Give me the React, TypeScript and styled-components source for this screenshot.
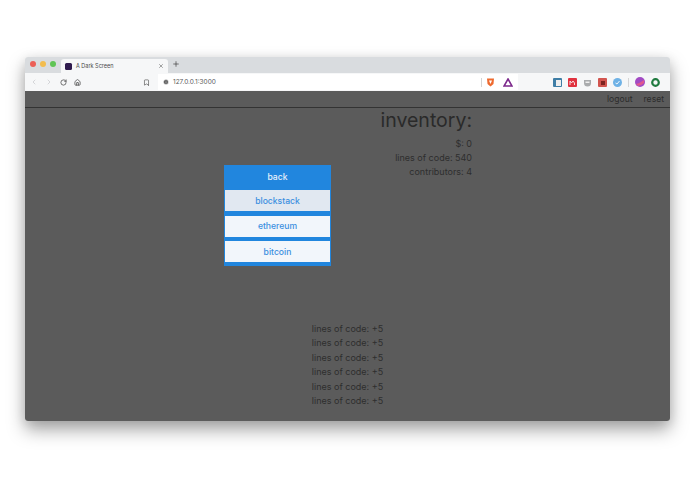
import React from 'react'
import styled, { createGlobalStyle } from 'styled-components'
import { ChevronLeft, ChevronRight, RotateCw, Home, Bookmark, Info, X, Plus } from 'lucide-react'

const GlobalStyle = createGlobalStyle`
  html, body { margin: 0; padding: 0; background: #fff; }
  body { font-family: Inter, "Liberation Sans", sans-serif; }
`

const Page = styled.div`
  width: 695px;
  height: 494px;
  padding: 57px 25px 0;
  box-sizing: border-box;
  overflow: hidden;
`

const Window = styled.div`
  width: 645px;
  height: 364px;
  border-radius: 3px;
  overflow: hidden;
  display: flex;
  flex-direction: column;
  box-shadow: 0 9px 18px rgba(0, 0, 0, 0.34), 0 2px 12px rgba(0, 0, 0, 0.1);
`

const TabStrip = styled.div`
  height: 16px;
  background: #d9dcdf;
  display: flex;
  align-items: flex-end;
  padding-left: 5px;
`

const Lights = styled.div`
  display: flex;
  gap: 4px;
  align-self: center;
  margin-right: 5px;
  margin-bottom: 2px;
`

const Light = styled.span<{ $color: string }>`
  width: 6px;
  height: 6px;
  border-radius: 50%;
  background: ${(p) => p.$color};
`

const Tab = styled.div`
  width: 107px;
  height: 14px;
  background: #f6f7f8;
  border-radius: 3px 3px 0 0;
  display: flex;
  align-items: center;
  padding: 0 4px;
  box-sizing: border-box;
  font-size: 5.5px;
  color: #4a4a4a;
`

const Favicon = styled.span`
  width: 7px;
  height: 7px;
  border-radius: 1.5px;
  background: #2f1b4e;
  margin-right: 4px;
  flex-shrink: 0;
`

const TabTitle = styled.span`
  flex: 1;
`

const NewTab = styled.div`
  margin: 0 0 2px 4px;
  align-self: center;
  display: flex;
  color: #3a3a3a;
`

const Toolbar = styled.div`
  height: 18px;
  background: #f6f7f8;
  display: flex;
  align-items: center;
  padding-left: 5px;
`

const NavIcons = styled.div`
  display: flex;
  align-items: center;
  gap: 7px;
  width: 113px;
  flex-shrink: 0;
`

const NavIcon = styled.span<{ $faded?: boolean }>`
  display: flex;
  color: ${(p) => (p.$faded ? '#c4c6c8' : '#3f3f3f')};
`

const Address = styled.div`
  width: 360px;
  height: 16px;
  background: #fff;
  display: flex;
  align-items: center;
  padding: 0 5px 0 5px;
  box-sizing: border-box;
  font-size: 6.5px;
  color: #5a5a5a;
  gap: 4px;
  flex-shrink: 0;
`

const Url = styled.span`
  flex: 1;
`

const Divider = styled.span`
  width: 1px;
  height: 9px;
  background: #d4d4d4;
`

const Extensions = styled.div`
  display: flex;
  align-items: center;
  gap: 6px;
  margin-left: 35px;
`

const Main = styled.div`
  flex: 1;
  background: #5b5b5b;
  display: flex;
  flex-direction: column;
  color: #2e2e2e;
`

const TopBar = styled.div`
  height: 16px;
  border-bottom: 1px solid #333;
  display: flex;
  justify-content: flex-end;
  align-items: center;
  gap: 11px;
  padding-right: 6px;
  font-size: 8.6px;
  color: #2c2c2c;
`

const Upper = styled.div`
  height: 214px;
  display: flex;
  justify-content: space-between;
  padding: 0 198px 0 199px;
`

const Menu = styled.div`
  width: 107px;
  margin-top: 57px;
  height: 101px;
  display: flex;
  flex-direction: column;
  background: #2186de;
`

const BackButton = styled.div`
  height: 23px;
  display: flex;
  align-items: center;
  justify-content: center;
  font-size: 8.6px;
  font-weight: 500;
  color: #e8f1fb;
`

const Choice = styled.div<{ $active?: boolean }>`
  height: 21px;
  margin: 2px 1px 2.5px;
  background: ${(p) => (p.$active ? '#e1e8f1' : '#f2f6fb')};
  display: flex;
  align-items: center;
  justify-content: center;
  font-size: 8.6px;
  font-weight: 500;
  color: #3b8fe0;
`

const Inventory = styled.div`
  text-align: right;
`

const Heading = styled.div`
  font-size: 19.5px;
  line-height: 22px;
  margin-top: 1px;
  margin-bottom: 6px;
  color: #2a2a2a;
`

const Stat = styled.div`
  font-size: 9px;
  line-height: 14px;
`

const Log = styled.div`
  display: flex;
  flex-direction: column;
  align-items: center;
  font-size: 9px;
  line-height: 14.4px;
`

const Ext = () => (
  <>
    <svg width="9" height="9" viewBox="0 0 9 9"><rect width="9" height="9" rx="1" fill="#3f7ea6" /><rect x="3" y="2" width="5" height="6" fill="#eee" /></svg>
    <svg width="9" height="9" viewBox="0 0 9 9"><rect width="9" height="9" rx="1" fill="#e0323f" /><path d="M2 7V3l1.500 2L5 3l1.500 2V7" fill="none" stroke="#fff" strokeWidth="0.8" /></svg>
    <svg width="9" height="9" viewBox="0 0 9 9"><path d="M1 2h7v3a3.500 3.500 0 0 1-7 0z" fill="#a9abad" /><rect x="2.500" y="3.500" width="4" height="1.500" fill="#eee" /></svg>
    <svg width="9" height="9" viewBox="0 0 9 9"><rect width="9" height="9" rx="1" fill="#d2554f" /><rect x="3" y="3" width="4" height="4" fill="#7d2320" /></svg>
    <svg width="9" height="9" viewBox="0 0 9 9"><circle cx="4.500" cy="4.500" r="4.500" fill="#6fb2e6" /><path d="M2.500 5l1.500 1 2.500-3" fill="none" stroke="#fff" strokeWidth="0.9" /></svg>
    <Divider />
    <svg width="10" height="10" viewBox="0 0 10 10"><circle cx="5" cy="5" r="5" fill="#a24bc4" /><path d="M1 7q4-1 8-4v3q-3 3-6 3z" fill="#e0588f" /></svg>
    <svg width="9" height="9" viewBox="0 0 9 9"><circle cx="4.500" cy="4.500" r="3.300" fill="none" stroke="#1f7a3f" strokeWidth="2.200" /></svg>
  </>
)

const App = () => (
  <Page>
    <GlobalStyle />
    <Window>
      <TabStrip>
        <Lights>
          <Light $color="#ec5f57" />
          <Light $color="#f3bd4f" />
          <Light $color="#5fc454" />
        </Lights>
        <Tab>
          <Favicon />
          <TabTitle>A Dark Screen</TabTitle>
          <X size={6} strokeWidth={2} />
        </Tab>
        <NewTab>
          <Plus size={8} strokeWidth={2} />
        </NewTab>
      </TabStrip>
      <Toolbar>
        <NavIcons>
          <NavIcon $faded><ChevronLeft size={8} /></NavIcon>
          <NavIcon $faded><ChevronRight size={8} /></NavIcon>
          <NavIcon><RotateCw size={7} strokeWidth={2.4} /></NavIcon>
          <NavIcon><Home size={7} strokeWidth={2.4} /></NavIcon>
        </NavIcons>
        <NavIcon style={{ marginRight: 8 }}><Bookmark size={7} strokeWidth={2} /></NavIcon>
        <Address>
          <Info size={6} fill="#555" color="#fff" />
          <Url>127.0.0.1:3000</Url>
          <Divider />
          <svg width="9" height="10" viewBox="0 0 9 10"><path d="M1 1.500h7L7.500 7 4.500 9.500 1.500 7z" fill="#ee6a2f" /><path d="M3 3.500h3L4.500 7z" fill="#fff" /></svg>
          <svg width="10" height="9" viewBox="0 0 10 9" style={{ marginLeft: 4 }}><path d="M5 1l4 7H1z" fill="none" stroke="#7d2a8c" strokeWidth="1.600" /></svg>
        </Address>
        <Extensions>
          <Ext />
        </Extensions>
      </Toolbar>
      <Main>
        <TopBar>
          <span>logout</span>
          <span>reset</span>
        </TopBar>
        <Upper>
          <Menu>
            <BackButton>back</BackButton>
            <Choice $active>blockstack</Choice>
            <Choice>ethereum</Choice>
            <Choice>bitcoin</Choice>
          </Menu>
          <Inventory>
            <Heading>inventory:</Heading>
            <Stat>$: 0</Stat>
            <Stat>lines of code: 540</Stat>
            <Stat>contributors: 4</Stat>
          </Inventory>
        </Upper>
        <Log>
          {Array.from({ length: 6 }, (_, i) => (
            <div key={i}>lines of code: +5</div>
          ))}
        </Log>
      </Main>
    </Window>
  </Page>
)

export default App
